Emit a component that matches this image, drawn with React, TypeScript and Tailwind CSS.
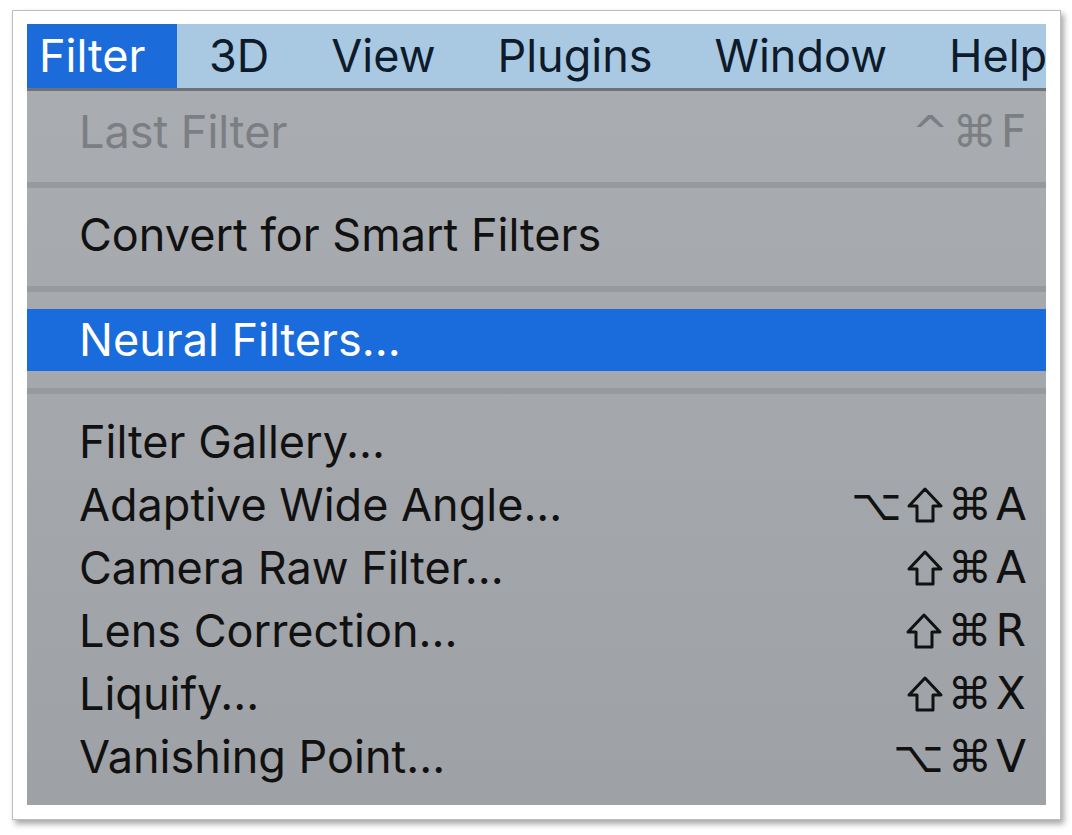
type Item = { label: string; keys?: string };

const TOOL_ITEMS: Item[] = [
	{ label: "Filter Gallery..." },
	{ label: "Adaptive Wide Angle...", keys: "⌥⇧⌘A" },
	{ label: "Camera Raw Filter...", keys: "⇧⌘A" },
	{ label: "Lens Correction...", keys: "⇧⌘R" },
	{ label: "Liquify...", keys: "⇧⌘X" },
	{ label: "Vanishing Point...", keys: "⌥⌘V" },
];

const MENUBAR = ["3D", "View", "Plugins", "Window", "Help"];

// wide hollow shift arrow, the DejaVu one is too thin
function ShiftGlyph() {
	return (
		<svg width="38" height="38" viewBox="0 0 38 38" fill="none" stroke="currentColor" strokeWidth="3" strokeLinejoin="round">
			<path d="M19 3 L35 20 H27 V35 H11 V20 H3 Z" />
		</svg>
	);
}

function Keys({ keys, dim }: { keys: string; dim?: boolean }) {
	return (
		<span
			className={`flex items-center gap-[4px] text-[44px] ${dim ? "text-[#7b7e82]" : "text-[#111]"}`}
			style={{ fontFamily: "'DejaVu Sans', Inter, sans-serif" }}
		>
			{keys.split("").map((k, i) =>
				k === "⇧" ? (
					<ShiftGlyph key={i} />
				) : (
					<span key={i} className="inline-block text-center leading-none">
						{k}
					</span>
				),
			)}
		</span>
	);
}

function Separator() {
	return <div className="h-[6px] bg-[#96999d]" />;
}

export default function App() {
	return (
		<div className="min-h-[835px] w-[1072px] bg-white pl-[12px] pt-[10px]" style={{ fontFamily: "Inter, 'Noto Sans', sans-serif" }}>
			<div className="w-[1049px] border border-[#bdbdbd] bg-white px-[14px] pb-[14px] pt-[13px] shadow-[3px_4px_6px_rgba(0,0,0,0.35)]">
				{/* menubar */}
				<div className="flex h-[64px] items-center overflow-hidden whitespace-nowrap bg-[#a9c9e3] text-[45px] text-[#0e1b2b]">
					<div className="flex h-full w-[150px] shrink-0 items-center bg-[#1b6bda] pl-[12px] text-white">Filter</div>
					<div className="flex items-center gap-[62px] pl-[32px]">
						{MENUBAR.map((m) => (
							<span key={m}>{m}</span>
						))}
					</div>
				</div>
				<div className="h-[3px] bg-[#6f7276]" />

				{/* dropdown */}
				<div className="bg-gradient-to-b from-[#a9acb0] to-[#9ea1a5] pb-[17px] pt-[9px] text-[45px] text-[#111]">
					<div className="flex h-[63px] items-center justify-between pl-[52px] pr-[20px] text-[#7b7e82]">
						<span>Last Filter</span>
						<Keys keys="^⌘F" dim />
					</div>
					<div className="mt-[19px]">
						<Separator />
					</div>
					<div className="mt-[15px] flex h-[63px] items-center pl-[52px]">Convert for Smart Filters</div>
					<div className="mt-[20px]">
						<Separator />
					</div>
					<div className="mt-[17px] flex h-[62px] items-center bg-[#1a6bdb] pl-[52px] text-white">Neural Filters...</div>
					<div className="mt-[17px]">
						<Separator />
					</div>
					<div className="mt-[16px]">
						{TOOL_ITEMS.map((it) => (
							<div key={it.label} className="flex h-[63px] items-center justify-between pl-[52px] pr-[20px]">
								<span>{it.label}</span>
								{it.keys && <Keys keys={it.keys} />}
							</div>
						))}
					</div>
				</div>
			</div>
		</div>
	);
}
